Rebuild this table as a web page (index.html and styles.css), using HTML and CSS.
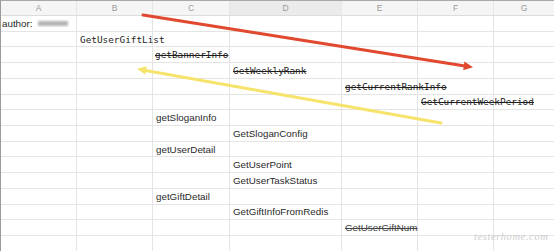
FILE: index.html
```html
<!DOCTYPE html>
<html>
<head>
<meta charset="utf-8">
<link rel="stylesheet" href="styles.css">
</head>
<body>
<div class="page">
  <div class="sheet">
    <div class="row">
      <div class="c hd">A</div><div class="c hd">B</div><div class="c hd">C</div><div class="c hd sel">D</div><div class="c hd">E</div><div class="c hd">F</div><div class="c hd">G</div>
    </div>
    <div class="row">
      <div class="c first"><span class="sans">author:</span><span class="blur"></span></div><div class="c"></div><div class="c"></div><div class="c"></div><div class="c"></div><div class="c"></div><div class="c"></div>
    </div>
    <div class="row">
      <div class="c"></div><div class="c"><span class="mono">GetUserGiftList</span></div><div class="c"></div><div class="c"></div><div class="c"></div><div class="c"></div><div class="c"></div>
    </div>
    <div class="row">
      <div class="c"></div><div class="c"></div><div class="c clip"><span class="mono strike">getBannerInfo</span></div><div class="c"></div><div class="c"></div><div class="c"></div><div class="c"></div>
    </div>
    <div class="row">
      <div class="c"></div><div class="c"></div><div class="c"></div><div class="c"><span class="mono strike">GetWeeklyRank</span></div><div class="c"></div><div class="c"></div><div class="c"></div>
    </div>
    <div class="row">
      <div class="c"></div><div class="c"></div><div class="c"></div><div class="c"></div><div class="c"><span class="mono strike">getCurrentRankInfo</span></div><div class="c"></div><div class="c"></div>
    </div>
    <div class="row">
      <div class="c"></div><div class="c"></div><div class="c"></div><div class="c"></div><div class="c"></div><div class="c"><span class="mono strike">GetCurrentWeekPeriod</span></div><div class="c"></div>
    </div>
    <div class="row">
      <div class="c"></div><div class="c"></div><div class="c"><span class="sans">getSloganInfo</span></div><div class="c"></div><div class="c"></div><div class="c"></div><div class="c"></div>
    </div>
    <div class="row">
      <div class="c"></div><div class="c"></div><div class="c"></div><div class="c"><span class="sans">GetSloganConfig</span></div><div class="c"></div><div class="c"></div><div class="c"></div>
    </div>
    <div class="row">
      <div class="c"></div><div class="c"></div><div class="c"><span class="sans">getUserDetail</span></div><div class="c"></div><div class="c"></div><div class="c"></div><div class="c"></div>
    </div>
    <div class="row">
      <div class="c"></div><div class="c"></div><div class="c"></div><div class="c"><span class="sans">GetUserPoint</span></div><div class="c"></div><div class="c"></div><div class="c"></div>
    </div>
    <div class="row">
      <div class="c"></div><div class="c"></div><div class="c"></div><div class="c"><span class="sans">GetUserTaskStatus</span></div><div class="c"></div><div class="c"></div><div class="c"></div>
    </div>
    <div class="row">
      <div class="c"></div><div class="c"></div><div class="c"><span class="sans">getGiftDetail</span></div><div class="c"></div><div class="c"></div><div class="c"></div><div class="c"></div>
    </div>
    <div class="row">
      <div class="c"></div><div class="c"></div><div class="c"></div><div class="c"><span class="sans">GetGiftInfoFromRedis</span></div><div class="c"></div><div class="c"></div><div class="c"></div>
    </div>
    <div class="row">
      <div class="c"></div><div class="c"></div><div class="c"></div><div class="c"></div><div class="c"><span class="sans strike gray">GetUserGiftNum</span></div><div class="c"></div><div class="c"></div>
    </div>
    <div class="row">
      <div class="c"></div><div class="c"></div><div class="c"></div><div class="c"></div><div class="c"></div><div class="c"></div><div class="c"></div>
    </div>
  </div>

  <svg class="arrows" width="554" height="251" viewBox="0 0 554 251">
    <line x1="143" y1="15" x2="465" y2="65.9" stroke="#e0492f" stroke-width="3" stroke-linecap="round"/>
    <polygon points="473,67.3 464.4,61.6 463.2,70.2" fill="#e0492f"/>
    <line x1="441" y1="123" x2="145.5" y2="70.4" stroke="#f6e36c" stroke-width="3" stroke-linecap="round"/>
    <polygon points="137,68.8 146.8,66.2 145.2,74.6" fill="#f6e36c"/>
  </svg>

  <div class="watermark">testerhome.com</div>
</div>
</body>
</html>
```

FILE: styles.css
```css
html, body {
  margin: 0;
  padding: 0;
  background: #fff;
}

.page {
  position: relative;
  width: 554px;
  height: 251px;
  overflow: hidden;
}

.sheet {
  display: grid;
  grid-template-columns: 76px 76px 77px 112px 76px 76px 61px;
  grid-template-rows: 15px repeat(15, 15.73px);
  border-top: 1px solid #a8a8a8;
  border-left: 1px solid #9a9a9a;
  width: 553px;
}

.row {
  display: contents;
}

.c {
  box-sizing: border-box;
  border-right: 1px solid #e4e4e4;
  border-bottom: 1px solid #e4e4e4;
  display: flex;
  align-items: center;
  padding-left: 3px;
  white-space: nowrap;
  min-width: 0;
}

.c.first {
  padding-left: 1px;
}

.c.clip {
  overflow: hidden;
  padding-left: 2px;
}

.hd {
  background: #f5f5f5;
  justify-content: center;
  padding-left: 0;
  font-family: "Liberation Sans", Arial, sans-serif;
  font-size: 8.5px;
  color: #9a9a9a;
  border-bottom: 1px solid #dcdcdc;
  border-right: 1px solid #e6e6e6;
}

.hd.sel {
  background: #ebebeb;
}

.sans {
  font-family: "Liberation Sans", Arial, sans-serif;
  font-size: 9.8px;
  color: #2a2a2a;
}

.mono {
  font-family: "DejaVu Sans Mono", "Liberation Mono", monospace;
  font-size: 9.4px;
  color: #1e1e1e;
}

.strike {
  text-decoration: line-through;
}

.gray {
  color: #444;
}

.blur {
  display: inline-block;
  width: 30px;
  height: 5px;
  margin-left: 5px;
  background: #b4b4b4;
  filter: blur(0.8px);
}

.arrows {
  position: absolute;
  left: 0;
  top: 0;
}

.watermark {
  position: absolute;
  left: 474px;
  top: 231px;
  font-family: "Liberation Serif", serif;
  font-style: italic;
  font-size: 10.5px;
  letter-spacing: 0.6px;
  color: #cdcdcd;
}
```
